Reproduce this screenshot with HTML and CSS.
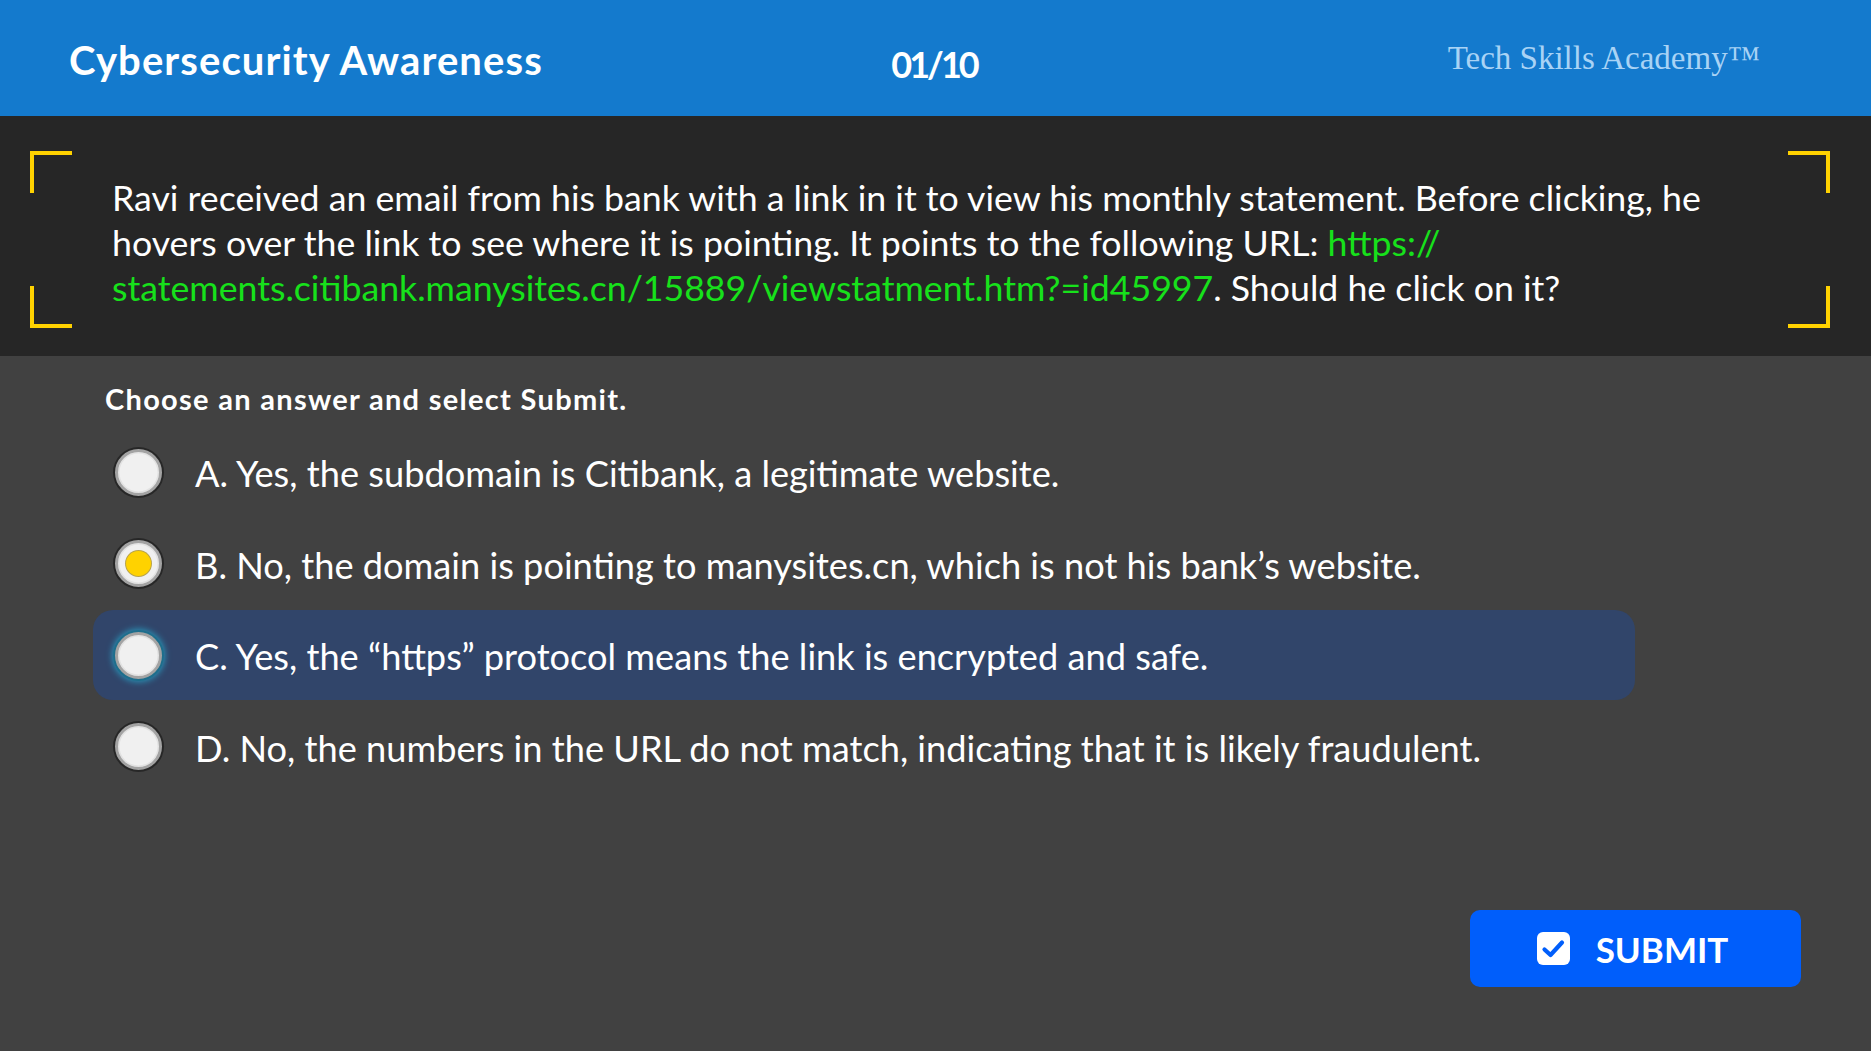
FILE: index.html
```html
<!DOCTYPE html>
<html lang="en">
<head>
<meta charset="utf-8">
<title>Cybersecurity Awareness</title>
<link rel="stylesheet" href="styles.css">
</head>
<body>
<header class="topbar">
  <h1 class="course-title">Cybersecurity Awareness</h1>
  <div class="counter">01/10</div>
  <div class="brand">Tech Skills Academy™</div>
</header>

<section class="question">
  <span class="corner corner-tl"></span>
  <span class="corner corner-tr"></span>
  <span class="corner corner-bl"></span>
  <span class="corner corner-br"></span>
  <p class="question-text">Ravi received an email from his bank with a link in it to view his monthly statement. Before clicking, he hovers over the link to see where it is pointing. It points to the following URL: <span class="url">https://<wbr>statements.citibank.manysites.cn/15889/viewstatment.htm?=id45997</span>. Should he click on it?</p>
</section>

<main class="answers">
  <p class="prompt">Choose an answer and select Submit.</p>
  <ul class="options">
    <li class="option"><span class="radio"></span><span class="option-text">A. Yes, the subdomain is Citibank, a legitimate website.</span></li>
    <li class="option"><span class="radio radio-selected"></span><span class="option-text">B. No, the domain is pointing to manysites.cn, which is not his bank’s website.</span></li>
    <li class="option option-hover"><span class="radio radio-focus"></span><span class="option-text">C. Yes, the “https” protocol means the link is encrypted and safe.</span></li>
    <li class="option"><span class="radio"></span><span class="option-text">D. No, the numbers in the URL do not match, indicating that it is likely fraudulent.</span></li>
  </ul>
  <div class="actions">
    <button class="submit" type="button">
      <svg class="submit-icon" width="33" height="33" viewBox="0 0 33 33" aria-hidden="true">
        <rect x="0" y="0" width="33" height="33" rx="6" fill="#ffffff"/>
        <path d="M7.5 17.5 L13.5 23 L25 10.5" fill="none" stroke="#005efb" stroke-width="4.2" stroke-linecap="round" stroke-linejoin="round"/>
      </svg>
      <span>SUBMIT</span>
    </button>
  </div>
</main>
</body>
</html>
```

FILE: styles.css
```css
html, body {
  margin: 0;
  padding: 0;
}

body {
  width: 1871px;
  height: 1051px;
  overflow: hidden;
  background: #414141;
  font-family: "Lato", "Open Sans", "Liberation Sans", sans-serif;
  color: #ffffff;
}

.topbar {
  height: 116px;
  background: #147acd;
  display: grid;
  grid-template-columns: 1fr auto 1fr;
  align-items: center;
  padding: 0 69px;
}

.course-title {
  margin: 0;
  font-size: 40px;
  font-weight: 700;
  letter-spacing: 1.1px;
  line-height: 1;
  padding-top: 4px;
}

.counter {
  font-size: 36px;
  font-weight: 700;
  letter-spacing: -3px;
  padding-top: 11px;
  padding-right: 3px;
}

.brand {
  justify-self: end;
  margin-right: 42px;
  font-family: "Liberation Serif", "DejaVu Serif", serif;
  font-size: 33px;
  color: #a9d3f5;
  padding-bottom: 0;
}

.question {
  position: relative;
  height: 240px;
  box-sizing: border-box;
  background: #262626;
  padding: 59px 110px 0 112px;
}

.corner {
  position: absolute;
  width: 38px;
  height: 38px;
  border: 0 solid #ffd200;
}

.corner-tl { left: 30px; top: 35px; border-top-width: 4px; border-left-width: 4px; }
.corner-tr { right: 41px; top: 35px; border-top-width: 4px; border-right-width: 4px; }
.corner-bl { left: 30px; top: 170px; border-bottom-width: 4px; border-left-width: 4px; }
.corner-br { right: 41px; top: 170px; border-bottom-width: 4px; border-right-width: 4px; }

.question-text {
  margin: 0;
  font-size: 35.7px;
  line-height: 45px;
  color: #ffffff;
}

.url {
  color: #17e11b;
}

.answers {
  padding: 27px 0 0 93px;
}

.prompt {
  margin: 0 0 12px 12px;
  font-size: 29px;
  font-weight: 700;
  letter-spacing: 1.3px;
  line-height: 32px;
}

.options {
  list-style: none;
  margin: 0;
  padding: 0;
  width: 1542px;
  display: flex;
  flex-direction: column;
  gap: 1.5px;
}

.option {
  height: 90px;
  display: flex;
  align-items: center;
  gap: 33px;
  padding-left: 22px;
  border-radius: 20px;
}

.option-hover {
  background: #31456a;
}

.option-text {
  font-size: 36.2px;
  color: #ffffff;
  padding-top: 2px;
}

.radio {
  position: relative;
  flex: none;
  width: 41px;
  height: 41px;
  border-radius: 50%;
  background: #f0f0f0;
  border: 3px solid #a3a3a3;
  box-shadow: 0 0 0 2px #272727, inset 0 0 0 1.5px #e2e2e2;
}

.radio-selected::after {
  content: "";
  position: absolute;
  left: 50%;
  top: 50%;
  width: 25px;
  height: 25px;
  margin: -12.5px 0 0 -12.5px;
  border-radius: 50%;
  background: #ffd200;
  box-shadow: 0 0 0 1px #b9a44a;
}

.radio-focus {
  box-shadow: 0 0 0 2px #1e6e8c, 0 0 6px 3px #2a93b8, inset 0 0 0 1.5px #e2e2e2;
}

.actions {
  display: flex;
  justify-content: flex-end;
  width: 1708px;
  margin-top: 118px;
}

.submit {
  width: 331px;
  height: 77px;
  border: 0;
  border-radius: 10px;
  background: #005efb;
  color: #ffffff;
  display: flex;
  align-items: center;
  justify-content: center;
  gap: 26px;
  padding: 0 6px 0 0;
  font-family: "Lato", "Open Sans", "Liberation Sans", sans-serif;
  font-size: 35px;
  font-weight: 700;
  cursor: pointer;
}

.submit span {
  padding-top: 2px;
}
```
